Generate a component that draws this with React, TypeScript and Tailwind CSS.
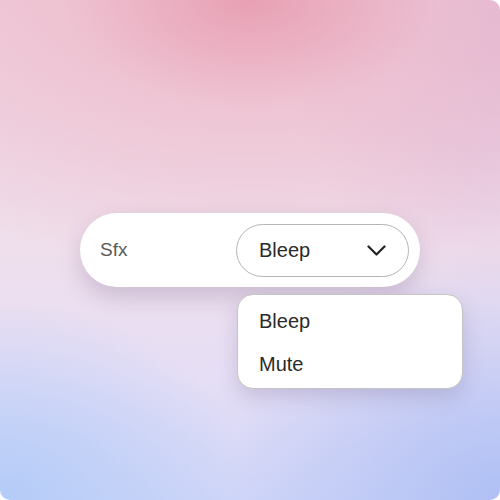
import React from 'react';

const options = ['Bleep', 'Mute'];

function Chevron() {
  return (
    <svg width="19" height="11" viewBox="0 0 19 11" fill="none" className="text-[#222]">
      <path d="M1.5 1.5 9.5 9.5l8-8" stroke="currentColor" strokeWidth="2.2" strokeLinecap="round" strokeLinejoin="round" />
    </svg>
  );
}

export default function App() {
  return (
    <div className="w-[500px] h-[500px] bg-white font-['Liberation_Sans',Arial,sans-serif]">
      <div className="w-full h-full rounded-tr-[10px] rounded-b-[10px] overflow-hidden bg-[radial-gradient(ellipse_95%_55%_at_50%_0%,#e8a0b4_0%,rgba(238,190,205,0.7)_40%,rgba(240,210,225,0)_100%),radial-gradient(ellipse_50%_40%_at_0%_100%,#b4ccf8_0%,rgba(180,204,248,0)_100%),radial-gradient(ellipse_55%_50%_at_100%_100%,#b0c0f4_0%,rgba(176,192,244,0)_100%),radial-gradient(ellipse_45%_60%_at_100%_0%,rgba(214,172,212,0.75)_0%,rgba(214,172,212,0)_100%),linear-gradient(180deg,#efcfdf_0%,#efdfec_50%,#e6def5_75%,#d0d6f8_100%)] pt-[213px] pl-[80px]">
        {/* Field row */}
        <div className="w-[340px] h-[74px] rounded-full bg-white flex items-center pl-[20px] pr-[11px] shadow-[0_10px_22px_rgba(90,70,110,0.22)]">
          <span className="text-[19px] text-[#5a5a5a]">Sfx</span>
          <button className="ml-auto w-[173px] h-[53px] rounded-full border-[1.5px] border-[#b4b4b4] flex items-center pl-[22px] pr-[22px]">
            <span className="text-[20px] text-[#2a2a2a]">Bleep</span>
            <span className="ml-auto">
              <Chevron />
            </span>
          </button>
        </div>

        {/* Menu */}
        <div className="ml-[157px] mt-[7px] w-[226px] h-[95px] rounded-[16px] bg-white border border-[#c4c4c4] pt-[4px] shadow-[0_8px_20px_rgba(90,70,110,0.2)]">
          {options.map((o) => (
            <div key={o} className="h-[43px] flex items-center pl-[21px] text-[20px] text-[#2a2a2a]">
              {o}
            </div>
          ))}
        </div>
      </div>
    </div>
  );
}
